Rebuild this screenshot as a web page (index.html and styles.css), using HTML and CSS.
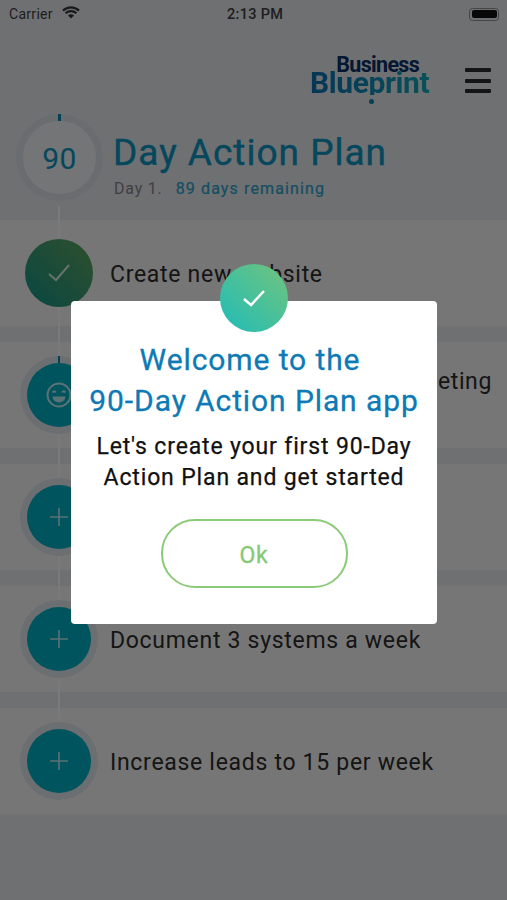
FILE: index.html
```html
<!DOCTYPE html>
<html lang="en">
<head>
<meta charset="utf-8">
<title>90 Day Action Plan</title>
<link rel="stylesheet" href="styles.css">
</head>
<body>
<div class="screen">
  <div class="status">
    <div class="status-left">
      <span>Carrier</span>
      <svg class="wifi" width="18" height="13" viewBox="0 0 18 13"><path d="M1 4.6a11.5 11.5 0 0 1 16 0M3.6 7.3a7.8 7.8 0 0 1 10.8 0" fill="none" stroke="#333" stroke-width="2.2"/><path d="M6 9.6a4.2 4.2 0 0 1 6 0L9 12.6z" fill="#333"/></svg>
    </div>
    <span class="status-time">2:13 PM</span>
    <div class="battery"><span class="battery-fill"></span></div>
  </div>
  <header class="topbar">
    <div class="logo">
      <span class="logo-top">Business</span>
      <span class="logo-bottom">Blueprint</span>
      <span class="logo-dot"></span>
    </div>
    <div class="menu"><span></span><span></span><span></span></div>
  </header>
  <section class="hero">
    <div class="dial"><span class="dial-tick"></span><span class="dial-num">90</span></div>
    <div class="hero-text">
      <h1>Day Action Plan</h1>
      <p><span class="day">Day 1.</span><span class="remaining">89 days remaining</span></p>
    </div>
  </section>
  <div class="list">
    <span class="spine"></span>
    <div class="row">
      <span class="marker done">
        <svg width="24" height="20" viewBox="0 0 24 20"><path d="M2 11l7 6L22 2" fill="none" stroke="#fff" stroke-opacity=".75" stroke-width="2"/></svg>
      </span>
      <span class="row-text">Create new website</span>
    </div>
    <div class="row">
      <span class="marker ring"><span class="marker-tick"></span>
        <svg width="26" height="26" viewBox="0 0 26 26" fill="none" stroke="#fff" stroke-opacity=".7" stroke-width="2"><circle cx="13" cy="13" r="11.5"/><path d="M6.5 10.5q1.7-2.4 3.4 0M16 10.5q1.7-2.4 3.4 0"/><path d="M6.5 14.5h13a6.5 6 0 0 1-13 0z" fill="#fff" fill-opacity=".7" stroke="none"/></svg>
      </span>
      <span class="row-text row-text-tight">Hold a monthly sales team meeting<br>with all staff</span>
    </div>
    <div class="row">
      <span class="marker ring"><svg class="plus" width="18" height="18" viewBox="0 0 18 18"><path d="M9 0v18M0 9h18" stroke="#fff" stroke-opacity=".7" stroke-width="1.6"/></svg></span>
      <span class="row-text">Update the sales script</span>
    </div>
    <div class="row">
      <span class="marker ring"><svg class="plus" width="18" height="18" viewBox="0 0 18 18"><path d="M9 0v18M0 9h18" stroke="#fff" stroke-opacity=".7" stroke-width="1.6"/></svg></span>
      <span class="row-text">Document 3 systems a week</span>
    </div>
    <div class="row">
      <span class="marker ring"><svg class="plus" width="18" height="18" viewBox="0 0 18 18"><path d="M9 0v18M0 9h18" stroke="#fff" stroke-opacity=".7" stroke-width="1.6"/></svg></span>
      <span class="row-text">Increase leads to 15 per week</span>
    </div>
  </div>
  <div class="overlay">
    <div class="modal">
      <span class="modal-badge">
        <svg width="24" height="19" viewBox="0 0 24 19"><path d="M2 10l7 6L22 2" fill="none" stroke="#fff" stroke-width="2.4"/></svg>
      </span>
      <h2><span class="title-first">Welcome to the</span><br>90-Day Action Plan app</h2>
      <p>Let's create your first 90-Day<br>Action Plan and get started</p>
      <button class="ok" type="button">Ok</button>
    </div>
  </div>
</div>
</body>
</html>
```
FILE: styles.css
```css
* { box-sizing: border-box; }
html, body { margin: 0; padding: 0; }
body { font-family: Roboto, "Liberation Sans", sans-serif; background: #dee0e4; }
.screen { position: relative; width: 507px; height: 900px; overflow: hidden; background: #dee0e4; }

.status { display: flex; align-items: center; justify-content: space-between; height: 28px; padding: 0 7px 0 9px; font-size: 14px; color: #3c3c3e; position: relative; }
.status-left { display: flex; align-items: center; gap: 9px; letter-spacing: .3px; }
.wifi { margin-top: -3px; }
.status-time { position: absolute; left: 227px; font-weight: 500; font-size: 14.5px; letter-spacing: .3px; }
.battery { width: 30px; height: 13px; border: 1px solid #8a8a8c; border-radius: 3.5px; padding: 1.5px; margin-right: 1px; }
.battery-fill { display: block; height: 100%; background: #111; border-radius: 2px; }

.topbar { display: flex; justify-content: flex-end; align-items: flex-start; height: 84px; padding: 27px 16px 0 0; gap: 33px; }
.logo { position: relative; display: flex; flex-direction: column; width: 121px; height: 50px; font-weight: 700; }
.logo-top { align-self: flex-end; margin: 2px 13px 0 0; font-size: 21.5px; line-height: 15px; letter-spacing: -.7px; color: #0b2f62; }
.logo-bottom { font-size: 30px; line-height: 25px; letter-spacing: -.4px; margin: -2px 0 0 -1px; background: linear-gradient(90deg, #0a6cab, #12a3b4); -webkit-background-clip: text; background-clip: text; color: transparent; }
.logo-dot { position: absolute; left: 58px; top: 44px; width: 5px; height: 5px; border-radius: 50%; background: #0a80a8; }
.menu { display: flex; flex-direction: column; gap: 6.5px; width: 26px; margin-top: 13px; }
.menu span { display: block; height: 4px; background: #2a2a2a; border-radius: 1px; }

.hero { display: flex; align-items: flex-start; height: 108px; padding-left: 16px; }
.dial { position: relative; width: 87px; height: 87px; border-radius: 50%; border: 7px solid #d2dbe0; background: #e8eaed; display: flex; align-items: center; justify-content: center; flex: none; margin-top: 2px; }
.dial-tick { position: absolute; top: -7px; left: 35px; width: 3px; height: 7px; background: #0d7fb0; }
.dial-num { font-size: 30px; color: #0a8eb8; letter-spacing: .5px; position: relative; top: 1px; }
.hero-text { margin-left: 11px; }
.hero-text h1 { margin: 19px 0 0 -1px; font-size: 37px; line-height: 44px; font-weight: 400; -webkit-text-stroke: .4px #0a8eb8; color: #0a8eb8; letter-spacing: 1px; }
.hero-text p { margin: 4px 0 0; font-size: 16px; line-height: 20px; letter-spacing: 1.13px; display: flex; gap: 13px; }
.day { color: #808084; letter-spacing: .8px; }
.remaining { color: #2b9cc4; -webkit-text-stroke: .2px #2b9cc4; }

.list { position: relative; display: flex; flex-direction: column; gap: 16px; }
.spine { position: absolute; left: 58px; top: -14px; width: 2px; height: 548px; background: #f2f5f6; z-index: 1; }
.row { display: flex; align-items: center; height: 106px; background: #ececec; padding-left: 27px; gap: 19px; }
.marker { position: relative; z-index: 2; width: 64px; height: 64px; border-radius: 50%; background: #00a8bc; display: flex; align-items: center; justify-content: center; flex: none; margin-top: 0; }
.ring { box-shadow: 0 0 0 7px #d6dee2; }
.done { width: 68px; height: 68px; margin: 0 -2px; background: linear-gradient(45deg, #128f86, #5fa05a); }
.row-text { font-size: 23px; line-height: 29px; letter-spacing: .7px; color: #2a2a2a; white-space: nowrap; position: relative; top: 1px; }
.row-text-tight { letter-spacing: .62px; }
.marker-tick { position: absolute; left: 31px; top: -7px; width: 2px; height: 7px; background: #0d7fb0; }

.overlay { position: absolute; inset: 0; z-index: 5; background: rgba(0, 0, 0, .5); display: flex; justify-content: center; align-items: flex-start; padding: 301px 0 0 1px; }
.modal { position: relative; width: 366px; height: 323px; background: #fff; border-radius: 4px; text-align: center; padding-top: 38px; }
.modal-badge { position: absolute; left: 149px; top: -37px; width: 68px; height: 68px; border-radius: 50%; background: linear-gradient(45deg, #1fbcb9, #72c47c); display: flex; align-items: center; justify-content: center; }
.modal h2 { margin: 0; font-size: 30px; line-height: 41px; font-weight: 400; -webkit-text-stroke: .3px #0d7ab5; color: #0d7ab5; letter-spacing: .9px; }
.title-first { display: inline-block; margin-right: 8px; }
.modal p { margin: 10px 0 0; font-size: 23px; line-height: 31px; font-weight: 400; -webkit-text-stroke: .25px #111; color: #111; letter-spacing: .85px; }
.ok { display: block; margin: 26px auto 0; width: 187px; height: 69px; border: 2px solid #8bcb78; border-radius: 34px; background: #fff; color: #86c873; font-family: inherit; font-size: 23px; font-weight: 400; -webkit-text-stroke: .3px #86c873; letter-spacing: .8px; padding: 4px 0 0; }
```
